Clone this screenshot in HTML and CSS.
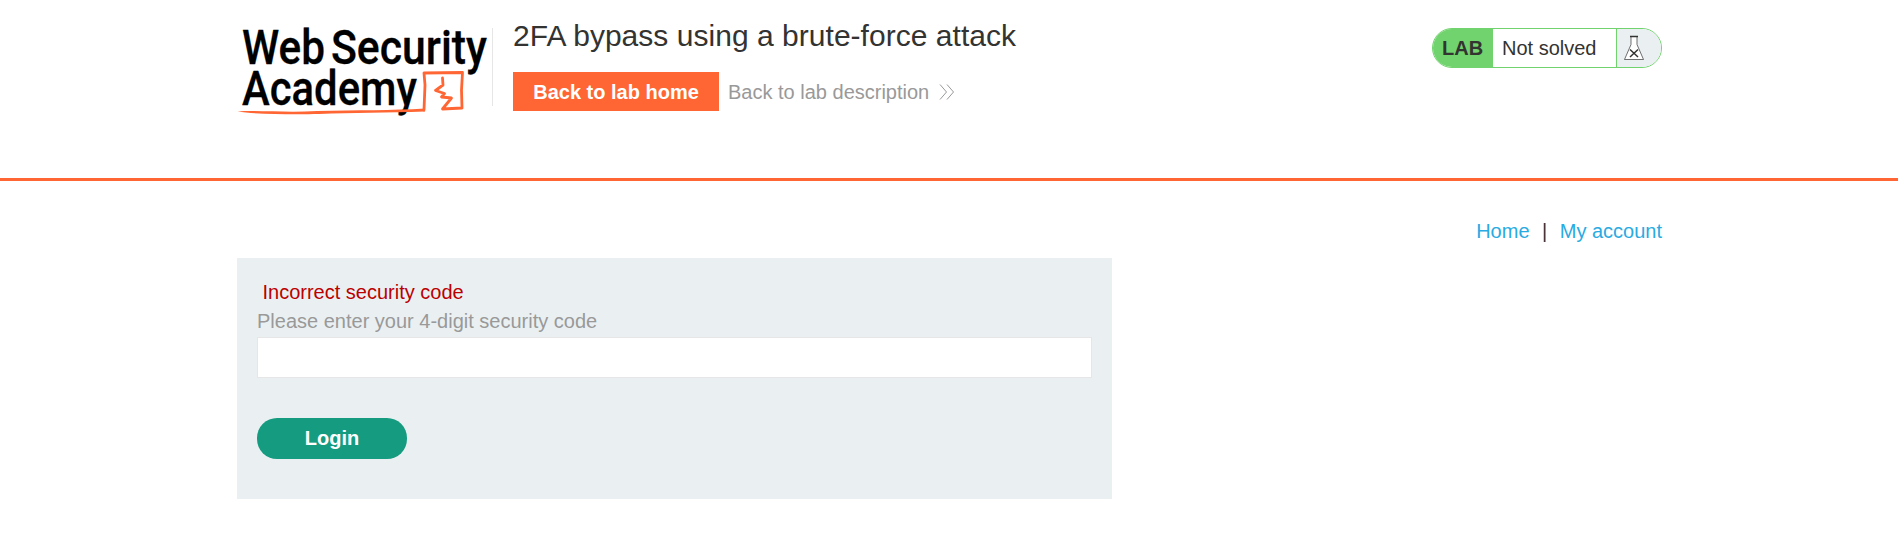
FILE: index.html
```html
<!DOCTYPE html>
<html lang="en">
<head>
<meta charset="utf-8">
<title>2FA bypass using a brute-force attack</title>
<link rel="stylesheet" href="styles.css">
</head>
<body>
<header class="lab-header">
  <div class="container header-row">
    <svg class="logo" viewBox="0 0 256 100" role="img" aria-label="Web Security Academy">
      <g class="logo-text">
        <text x="5" y="49" textLength="83" lengthAdjust="spacingAndGlyphs">Web</text>
        <text x="94" y="49" textLength="156" lengthAdjust="spacingAndGlyphs">Security</text>
        <text x="5" y="90" textLength="175" lengthAdjust="spacingAndGlyphs">Academy</text>
      </g>
      <path class="logo-underline" d="M0.500 96.500C20 95 50 98 80 96C120 95 155 95.500 188 93.500L188 96.500C150 98 115 97.500 82 99C60 99.500 20 99.500 0.500 96.500Z"/>
      <path class="logo-mark" d="M187 95L188 70L187 58L225.500 57.500L224.500 75L225 93L205.500 94L214.500 83L204.500 82L207.500 78.500L198.500 75.500L206 70L205.500 63"/>
    </svg>
    <div class="title-block">
      <h1 class="title">2FA bypass using a brute-force attack</h1>
      <div class="actions">
        <a class="home-button">Back to lab home</a>
        <a class="description-link">Back to lab description
          <svg class="chevrons" viewBox="0 0 16 18"><path d="M1 1.500L7.500 9L1 16.500M8 1.500L14.500 9L8 16.500"/></svg>
        </a>
      </div>
    </div>
    <div class="status">
      <span class="status-tag">LAB</span>
      <span class="status-text">Not solved</span>
      <span class="status-icon">
        <svg class="flask" viewBox="0 0 22 26"><path class="flask-body" d="M8 1.500V9.500L1.500 24.500H20.500L14 9.500V1.500"/><path class="flask-rim" d="M7 1.500H15"/><path class="flask-cross" d="M7 14.500L15 22M15 14.500L7 22"/></svg>
      </span>
    </div>
  </div>
</header>
<main class="container">
  <nav class="nav"><a>Home</a><span class="separator">|</span><a>My account</a></nav>
  <form class="login-form">
    <p class="warning">Incorrect security code</p>
    <label class="label" for="code">Please enter your 4-digit security code</label>
    <input class="code-input" id="code" type="text">
    <button class="login-button" type="button">Login</button>
  </form>
</main>
</body>
</html>
```
FILE: styles.css
```css
* { box-sizing: border-box; }
body { margin: 0; background: #fff; color: #333332; font: 20px/29px "Liberation Sans", Arial, sans-serif; }
.container { width: 1425px; margin: 0 auto; }
main.container, .header-row { position: relative; left: 0.5px; }
.lab-header { height: 181px; border-bottom: 3px solid #ff6633; }
.header-row { display: flex; align-items: flex-start; }
.logo { width: 256px; height: 100px; flex: none; margin-top: 15px; overflow: visible; }
.logo-text { font-family: Roboto, sans-serif; font-size: 48px; font-weight: 500; fill: #000; stroke: #000; stroke-width: 0.3; }
.logo-underline { fill: #ff6633; }
.logo-mark { fill: none; stroke: #ff6633; stroke-width: 2.8; stroke-linejoin: round; stroke-linecap: round; }
.title-block { flex: 1; height: 78px; margin-top: 28px; margin-left: -1px; padding-left: 20px; border-left: 1px solid #e6e6e6; }
.title { margin: -10px 0 18px; font-size: 30px; line-height: 36px; font-weight: 400; letter-spacing: 0.03px; }
.actions { display: flex; align-items: center; gap: 9px; }
.home-button { width: 206px; height: 39px; line-height: 40px; background: #ff6633; color: #fff; font-weight: 700; text-align: center; }
.description-link { display: flex; align-items: center; gap: 10px; padding-top: 1px; color: #999; }
.chevrons { width: 16px; height: 18px; margin-top: -1px; fill: none; stroke: #999; }
.status { display: flex; width: 230px; height: 40px; margin-top: 28px; border: 1px solid #70d36d; border-radius: 20px; overflow: hidden; line-height: 39px; }
.status-tag { width: 60px; padding-left: 9px; background: #70d36d; font-weight: 700; }
.status-text { flex: 1; padding-left: 9px; }
.status-icon { display: flex; align-items: center; width: 45px; padding-left: 6px; border-left: 1px solid #70d36d; background: #eaf0f2; }
.flask { width: 22px; height: 26px; fill: none; stroke: #333332; }
.flask-body { fill: #fff; stroke-width: 0.7; }
.flask-rim { stroke-width: 1.5; }
.flask-cross { stroke-width: 1.5; }
.nav { display: flex; justify-content: flex-end; gap: 12.5px; padding-top: 36px; color: #29abe2; }
.separator { color: #333332; }
.login-form { display: flex; flex-direction: column; width: 875px; height: 241px; margin-top: 12px; padding: 20px; background: #eaf0f2; }
.warning { margin: 0; padding-left: 5.5px; color: #b00; }
.label { color: #999; }
.code-input { height: 41px; margin-top: 1px; border: 1px solid #e6e6e6; background: #fff; font: inherit; }
.login-button { width: 150px; height: 41px; margin-top: 40px; padding: 0; border: 0; border-radius: 20px; background: #159b80; color: #fff; font: inherit; font-weight: 700; }
```
